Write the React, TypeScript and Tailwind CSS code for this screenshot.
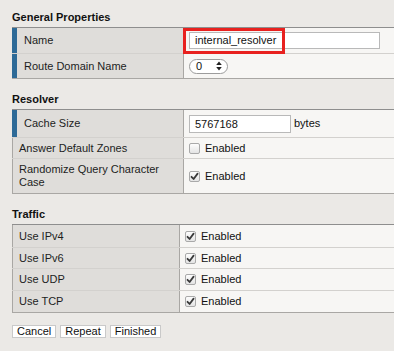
import React from "react";

const font = { fontFamily: '"Liberation Sans", Arial, Helvetica, sans-serif' };

function Check({ checked }: { checked?: boolean }) {
  return (
    <span className="inline-flex items-center justify-center w-[11px] h-[11px] rounded-[2px] border border-[#a9a9a9] bg-gradient-to-b from-[#fdfdfd] to-[#e4e4e4] shrink-0">
      {checked && (
        <svg width="9" height="9" viewBox="0 0 9 9">
          <path d="M1.5 4.8 L3.6 7 L7.6 1.6" fill="none" stroke="#3a3a3a" strokeWidth="1.8" strokeLinecap="round" strokeLinejoin="round" />
        </svg>
      )}
    </span>
  );
}

function Enabled({ checked }: { checked?: boolean }) {
  return (
    <div className="flex items-center gap-[5px]">
      <Check checked={checked} />
      <span className="text-[11px] text-[#111]">Enabled</span>
    </div>
  );
}

type RowProps = {
  label: React.ReactNode;
  h: string;
  required?: boolean;
  left: string;
  children?: React.ReactNode;
  last?: boolean;
};

function Row({ label, h, required, left, children, last }: RowProps) {
  return (
    <div className={`flex ${h} ${last ? "" : "border-b border-[#d3d1ce]"}`}>
      <div className={`${left} shrink-0 flex items-center bg-[#dfddda] border-r border-[#a9a7a4] ${required ? "border-l-[5px] border-l-[#2d6a97] pl-[7px]" : "border-l border-l-[#a9a7a4] pl-[6px]"} pr-2 text-[11px] leading-[13px] text-[#1d1d1d]`}>
        {label}
      </div>
      <div className="flex-1 flex items-center bg-[#f7f6f4] pl-[5px] relative">{children}</div>
    </div>
  );
}

function Section({ title, children, first }: { title: string; children: React.ReactNode; first?: boolean }) {
  return (
    <div className={first ? "pt-[9px]" : "mt-[12px]"}>
      <div className="text-[11px] leading-[16px] font-bold text-[#111] mb-[2px]">{title}</div>
      <div className="border-t border-t-[#8e8e8e] border-b border-b-[#a9a7a4]">{children}</div>
    </div>
  );
}

export default function App() {
  return (
    <div className="w-[394px] h-[351px] bg-[#ebe9e6] pl-[12px] overflow-hidden" style={font}>
      <Section title="General Properties" first>
        <Row label="Name" h="h-[26px]" required left="w-[172px]">
          <div className="relative">
            <div className="w-[191px] h-[17px] border border-[#b9b9b9] bg-white pl-[5px] text-[11px] leading-[15px] text-[#111]">
              internal_resolver
            </div>
            <div className="absolute left-[-6px] top-[-4px] w-[102px] h-[26px] border-[3px] border-[#e8211f] pointer-events-none" />
          </div>
        </Row>
        <Row label="Route Domain Name" h="h-[24px]" required left="w-[172px]" last>
          <div className="w-[39px] h-[15px] rounded-full border border-[#9c9c9c] bg-white flex items-center justify-between pl-[6px] pr-[5px] text-[11px] leading-[13px] text-[#111]">
            <span>0</span>
            <svg width="6" height="10" viewBox="0 0 6 10">
              <path d="M3 0.5 L5.8 4 L0.2 4 Z M3 9.5 L5.8 6 L0.2 6 Z" fill="#222" />
            </svg>
          </div>
        </Row>
      </Section>

      <Section title="Resolver">
        <Row label="Cache Size" h="h-[28px]" required left="w-[172px]">
          <div className="w-[102px] h-[18px] border border-[#b9b9b9] bg-white pl-[5px] text-[11px] leading-[16px] text-[#111]">
            5767168
          </div>
          <span className="ml-[3px] text-[11px] text-[#111]">bytes</span>
        </Row>
        <Row label="Answer Default Zones" h="h-[21px]" left="w-[172px]">
          <Enabled />
        </Row>
        <Row label="Randomize Query Character Case" h="h-[34px]" left="w-[172px]" last>
          <Enabled checked />
        </Row>
      </Section>

      <Section title="Traffic">
        <Row label="Use IPv4" h="h-[23px]" left="w-[168px]">
          <Enabled checked />
        </Row>
        <Row label="Use IPv6" h="h-[21px]" left="w-[168px]">
          <Enabled checked />
        </Row>
        <Row label="Use UDP" h="h-[22px]" left="w-[168px]">
          <Enabled checked />
        </Row>
        <Row label="Use TCP" h="h-[21px]" left="w-[168px]" last>
          <Enabled checked />
        </Row>
      </Section>

      <div className="flex gap-[4px] mt-[12px]">
        {["Cancel", "Repeat", "Finished"].map((b) => (
          <button
            key={b}
            className="h-[13px] px-[4px] bg-white border border-[#c9c9c9] text-[11px] leading-[11px] text-[#111]"
            style={font}
          >
            {b}
          </button>
        ))}
      </div>
    </div>
  );
}
